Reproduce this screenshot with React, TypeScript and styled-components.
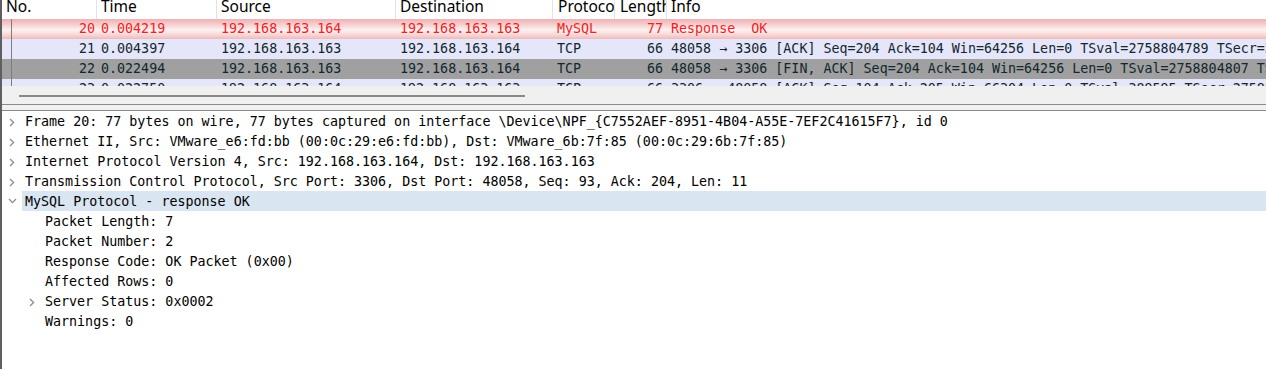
import React from 'react';
import styled, { createGlobalStyle } from 'styled-components';

const GlobalStyle = createGlobalStyle`
  html, body { margin: 0; padding: 0; background: #fff; overflow: hidden; }
  #root { width: 1266px; height: 369px; }
`;

const MONO = `"DejaVu Sans Mono", "Liberation Mono", monospace`;
const COLS = '95px 120px 179px 157px 62px 52px 1fr';

const Window = styled.div`
  width: 1266px;
  height: 369px;
  box-sizing: border-box;
  border-left: 2px solid #5f5f5f;
  display: flex;
  flex-direction: column;
  background: #fff;
  overflow: hidden;
`;

const Header = styled.div`
  display: grid;
  grid-template-columns: ${COLS};
  height: 19px;
  background: #fff;
  font-family: "Noto Sans", "Open Sans", sans-serif;
  font-size: 15.5px;
  color: #000;
`;

const HeaderCell = styled.div<{ $pad?: number }>`
  border-right: 1px solid #e3e3e3;
  padding-left: ${(p) => p.$pad ?? 4}px;
  line-height: 12px;
  overflow: hidden;
  white-space: nowrap;
  &:last-child { border-right: none; }
`;

const RowsViewport = styled.div`
  height: 67px;
  overflow: hidden;
`;

const PacketRow = styled.div<{ $bg: string; $fg: string }>`
  display: grid;
  grid-template-columns: ${COLS};
  height: 20px;
  line-height: 20px;
  background: ${(p) => p.$bg};
  color: ${(p) => p.$fg};
  font-family: ${MONO};
  font-size: 13.33px;
`;

const Cell = styled.div<{ $align?: 'left' | 'right'; $pad?: number }>`
  overflow: hidden;
  white-space: pre;
  text-align: ${(p) => p.$align ?? 'left'};
  padding: ${(p) => (p.$align === 'right' ? `0 ${p.$pad ?? 4}px 0 0` : `0 0 0 ${p.$pad ?? 4}px`)};
`;

const NoCell = styled(Cell)`
  position: relative;
  &::before {
    content: '';
    position: absolute;
    left: 9px;
    top: 0;
    bottom: 0;
    width: 1px;
    background: #7d7d7d;
  }
`;

const HScroll = styled.div`
  height: 18px;
  background: #f0f0f0;
  display: flex;
  align-items: flex-start;
`;

const HThumb = styled.div`
  margin: 9px 0 0 17px;
  width: 506px;
  height: 2px;
  background: #8a8a8a;
`;

const Splitter = styled.div`
  height: 5px;
  background: #f0f0f0;
  border-top: 1px solid #8a8a8a;
  border-bottom: 1px solid #8a8a8a;
`;

const Details = styled.div`
  flex: 1;
  background: #fff;
  font-family: ${MONO};
  font-size: 13.33px;
  color: #000;
`;

const TreeRow = styled.div<{ $level: number }>`
  display: flex;
  height: 20px;
  padding-left: ${(p) => p.$level * 20}px;
`;

const Toggle = styled.div`
  width: 20px;
  flex: none;
  display: flex;
  align-items: center;
  justify-content: center;
`;

const Label = styled.div<{ $selected?: boolean }>`
  flex: 1;
  padding: 1px 0 0 3px;
  box-sizing: border-box;
  line-height: 20px;
  white-space: pre;
  overflow: hidden;
  background: ${(p) => (p.$selected ? '#d9e5f0' : 'transparent')};
`;

const ChevronRight = () => (
  <svg width="6" height="9" viewBox="0 0 6 9" style={{ marginTop: 2 }}>
    <path d="M1 1 L4.6 4.5 L1 8" fill="none" stroke="#8c8c8c" strokeWidth="1.3" />
  </svg>
);

const ChevronDown = () => (
  <svg width="9" height="6" viewBox="0 0 9 6">
    <path d="M1 1 L4.5 4.6 L8 1" fill="none" stroke="#8c8c8c" strokeWidth="1.3" />
  </svg>
);

type Packet = {
  no: string; time: string; src: string; dst: string; proto: string; len: string; info: string;
  bg: string; fg: string;
};

const LAV = '#e6e6fa';
const FG = '#12272e';

const packets: Packet[] = [
  {
    no: '20', time: '0.004219', src: '192.168.163.164', dst: '192.168.163.163', proto: 'MySQL', len: '77',
    info: 'Response  OK',
    bg: 'linear-gradient(to bottom, #efb0b2 0%, #f6d2d2 30%, #fdf1f1 55%, #f7d6d6 80%, #f0b9ba 100%)',
    fg: '#f01e24',
  },
  {
    no: '21', time: '0.004397', src: '192.168.163.163', dst: '192.168.163.164', proto: 'TCP', len: '66',
    info: '48058 → 3306 [ACK] Seq=204 Ack=104 Win=64256 Len=0 TSval=2758804789 TSecr=389595',
    bg: LAV, fg: FG,
  },
  {
    no: '22', time: '0.022494', src: '192.168.163.163', dst: '192.168.163.164', proto: 'TCP', len: '66',
    info: '48058 → 3306 [FIN, ACK] Seq=204 Ack=104 Win=64256 Len=0 TSval=2758804807 TSecr=389595',
    bg: '#a0a0a0', fg: FG,
  },
  {
    no: '23', time: '0.022750', src: '192.168.163.164', dst: '192.168.163.163', proto: 'TCP', len: '66',
    info: '3306 → 48058 [ACK] Seq=104 Ack=205 Win=66304 Len=0 TSval=389595 TSecr=2758804807',
    bg: LAV, fg: FG,
  },
];

type Node = { level: number; text: string; toggle?: 'right' | 'down'; selected?: boolean };

const tree: Node[] = [
  { level: 0, toggle: 'right', text: 'Frame 20: 77 bytes on wire, 77 bytes captured on interface \\Device\\NPF_{C7552AEF-8951-4B04-A55E-7EF2C41615F7}, id 0' },
  { level: 0, toggle: 'right', text: 'Ethernet II, Src: VMware_e6:fd:bb (00:0c:29:e6:fd:bb), Dst: VMware_6b:7f:85 (00:0c:29:6b:7f:85)' },
  { level: 0, toggle: 'right', text: 'Internet Protocol Version 4, Src: 192.168.163.164, Dst: 192.168.163.163' },
  { level: 0, toggle: 'right', text: 'Transmission Control Protocol, Src Port: 3306, Dst Port: 48058, Seq: 93, Ack: 204, Len: 11' },
  { level: 0, toggle: 'down', selected: true, text: 'MySQL Protocol - response OK' },
  { level: 1, text: 'Packet Length: 7' },
  { level: 1, text: 'Packet Number: 2' },
  { level: 1, text: 'Response Code: OK Packet (0x00)' },
  { level: 1, text: 'Affected Rows: 0' },
  { level: 1, toggle: 'right', text: 'Server Status: 0x0002' },
  { level: 1, text: 'Warnings: 0' },
];

export default function App() {
  return (
    <>
      <GlobalStyle />
      <Window>
        <Header>
          <HeaderCell>No.</HeaderCell>
          <HeaderCell>Time</HeaderCell>
          <HeaderCell>Source</HeaderCell>
          <HeaderCell>Destination</HeaderCell>
          <HeaderCell $pad={5}>Protocol</HeaderCell>
          <HeaderCell $pad={5}>Length</HeaderCell>
          <HeaderCell>Info</HeaderCell>
        </Header>
        <RowsViewport>
          {packets.map((p) => (
            <PacketRow key={p.no} $bg={p.bg} $fg={p.fg}>
              <NoCell $align="right" $pad={2}>{p.no}</NoCell>
              <Cell>{p.time}</Cell>
              <Cell>{p.src}</Cell>
              <Cell>{p.dst}</Cell>
              <Cell>{p.proto}</Cell>
              <Cell $align="right">{p.len}</Cell>
              <Cell>{p.info}</Cell>
            </PacketRow>
          ))}
        </RowsViewport>
        <HScroll>
          <HThumb />
        </HScroll>
        <Splitter />
        <Details>
          {tree.map((n, i) => (
            <TreeRow key={i} $level={n.level}>
              <Toggle>
                {n.toggle === 'right' && <ChevronRight />}
                {n.toggle === 'down' && <ChevronDown />}
              </Toggle>
              <Label $selected={n.selected}>{n.text}</Label>
            </TreeRow>
          ))}
        </Details>
      </Window>
    </>
  );
}
